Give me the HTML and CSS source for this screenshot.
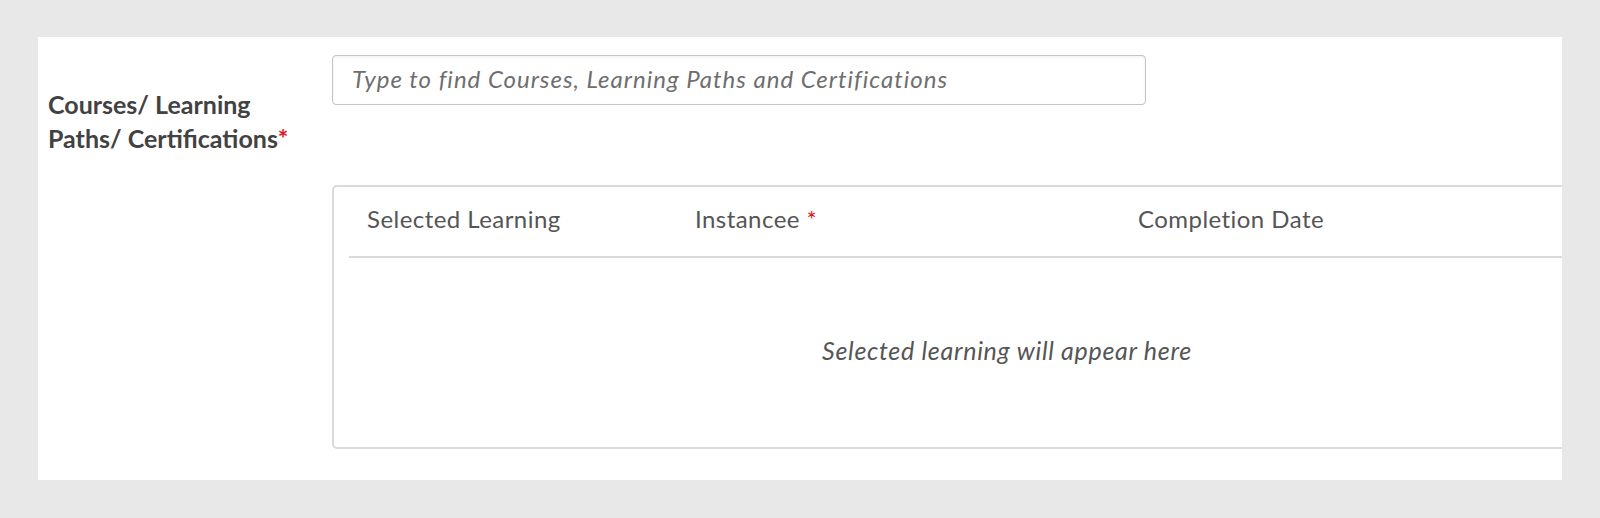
FILE: index.html
```html
<!DOCTYPE html>
<html lang="en">
<head>
<meta charset="utf-8">
<title>Learning form</title>
<link rel="stylesheet" href="styles.css">
</head>
<body>
  <div class="panel">
    <div class="field-label"><span class="label-text">Courses/ Learning Paths/ Certifications<span class="req">*</span></span></div>
    <div class="field-body">
      <div class="search">
        <input class="search-input" type="text" placeholder="Type to find Courses, Learning Paths and Certifications">
      </div>
      <div class="table">
        <div class="table-head">
          <div class="col col-learning">Selected Learning</div>
          <div class="col col-instance">Instancee <span class="req-h">*</span></div>
          <div class="col col-date">Completion Date</div>
        </div>
        <div class="table-empty">Selected learning will appear here</div>
      </div>
    </div>
  </div>
</body>
</html>
```

FILE: styles.css
```css
* { box-sizing: border-box; }

html, body {
  margin: 0;
  height: 100%;
}

body {
  background: #e8e8e8;
  padding: 37px 0 0 38px;
  font-family: Lato, "Open Sans", sans-serif;
  color: #4d4d4d;
}

.panel {
  width: 1524px;
  height: 443px;
  background: #ffffff;
  overflow: hidden;
  display: flex;
}

.field-label {
  flex: 0 0 294px;
  width: 294px;
  padding: 50px 0 0 10px;
}

.label-text {
  display: block;
  width: 255px;
  font-size: 25px;
  line-height: 34px;
  font-weight: 700;
  color: #424242;
}

.label-text .req {
  color: #e3121b;
}

.field-body {
  flex: 0 0 auto;
  padding-top: 18px;
  display: flex;
  flex-direction: column;
}

.search {
  width: 814px;
}

.search-input {
  display: block;
  width: 100%;
  height: 50px;
  border: 1.5px solid #c4c4c4;
  border-radius: 4px;
  box-shadow: inset 0 1px 3px rgba(0, 0, 0, 0.07);
  padding: 0 19px 3px;
  font-family: Lato, "Open Sans", sans-serif;
  font-size: 24px;
  letter-spacing: 1px;
  font-style: italic;
  color: #555;
  background: #fff;
  outline: none;
}

.search-input::placeholder {
  color: #6e6e6e;
  font-style: italic;
}

.table {
  margin-top: 80px;
  width: 1350px;
  height: 264px;
  border: 2px solid #dadada;
  border-radius: 5px;
  display: flex;
  flex-direction: column;
}

.table-head {
  margin-left: 15px;
  height: 71px;
  border-bottom: 2px solid #dadada;
  display: flex;
  align-items: center;
  padding-left: 18px;
  padding-bottom: 6px;
  font-size: 24px;
  letter-spacing: 0.45px;
  color: #555;
}

.col-learning { width: 328px; }
.col-instance { width: 443px; }

.req-h {
  color: #e3121b;
}

.table-empty {
  flex: 1;
  display: flex;
  align-items: center;
  justify-content: center;
  padding-bottom: 5px;
  font-size: 25px;
  letter-spacing: 0.7px;
  font-style: italic;
  color: #555;
}
```
